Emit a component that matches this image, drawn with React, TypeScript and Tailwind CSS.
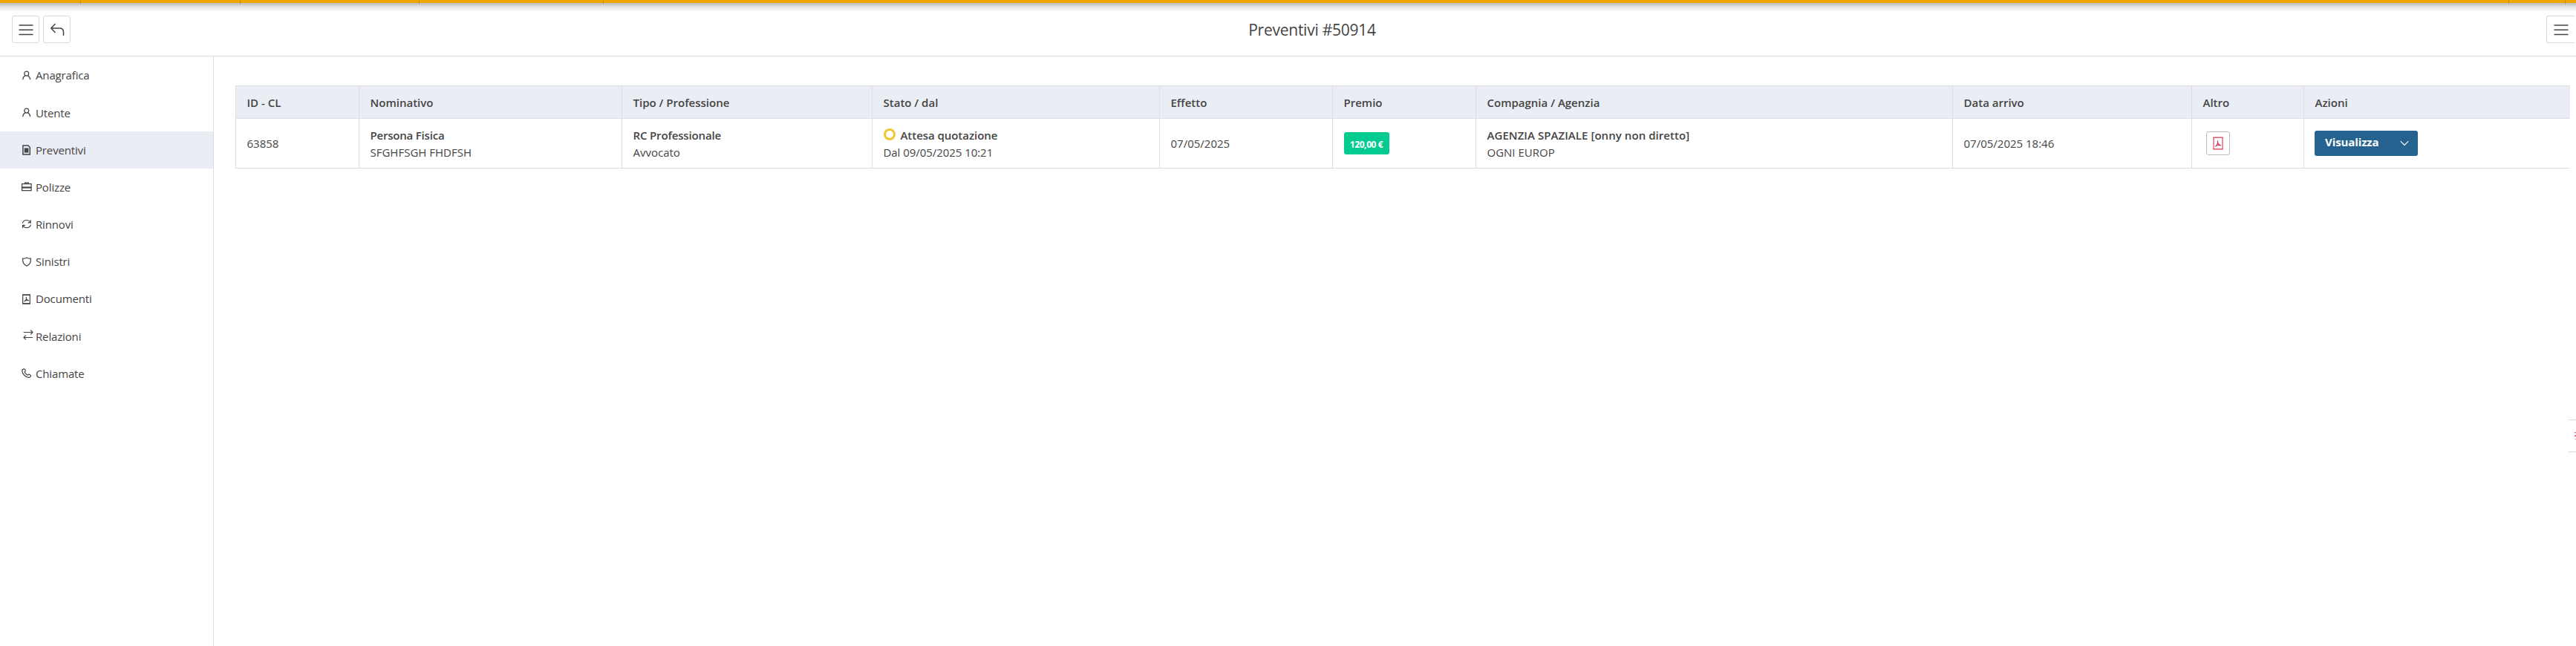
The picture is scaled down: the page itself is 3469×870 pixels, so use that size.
import type { ReactNode } from "react";

const Icon = ({ children }: { children: ReactNode }) => (
  <svg width="14" height="14" viewBox="0 0 14 14" fill="none" stroke="currentColor" strokeWidth="1.2" className="shrink-0">
    {children}
  </svg>
);

const PersonIcon = () => (
  <Icon>
    <circle cx="6.7" cy="4.1" r="3" />
    <path d="M1.700 12.300c.2-2.700 1.600-4.600 3.300-5.500M8.400 6.800c1.700.9 3.100 2.800 3.300 5.500" />
  </Icon>
);
const FileIcon = () => (
  <Icon>
    <path d="M1.900 1.100H9l2.300 2.400v9.400H1.900z" strokeWidth="1.500" />
    <path d="M3.800 4.400h5.600v6.200H3.800z" fill="currentColor" stroke="none" />
  </Icon>
);
const BriefcaseIcon = () => (
  <Icon>
    <path d="M.600 2.700h12.500v9H.600z" />
    <path d="M4.600 2.500V1.200h4.600v1.300" />
    <path d="M.600 7.500h12.500" strokeWidth="2.200" />
  </Icon>
);
const RefreshIcon = () => (
  <Icon>
    <path d="M1.300 5.600C2 3 4.200 1.500 6.700 1.500c2.300 0 4.200 1.200 5.200 3.200M12.200 1.300v3.600H8.700" />
    <path d="M12.400 7.600c-.7 2.600-2.900 4.100-5.400 4.100-2.300 0-4.200-1.200-5.200-3.200M1.500 12V8.300h3.500" />
  </Icon>
);
const ShieldIcon = () => (
  <Icon>
    <path d="M7 .900C5.200 2 3.300 2.300 1.500 2.200c-.2 4.200 1 8 5.500 10.100 4.500-2.100 5.700-5.900 5.500-10.100C10.700 2.300 8.800 2 7 .900z" />
  </Icon>
);
const DocumentIcon = () => (
  <Icon>
    <path d="M1.700.8v12.400M11.300.8v12.400" />
    <path d="M1.200 1.200h10.600M1.200 12.800h10.600" strokeWidth="1.800" />
    <path d="M6.200 3.800c.9 2.300.6 4-2.700 6.500M6.500 6.500c.6 1.600 1.600 2.300 3.300 2.200M4.200 9.300c1.500-.8 3.300-1.100 5.600-.6" />
  </Icon>
);
const SwapIcon = () => (
  <svg width="16" height="14" viewBox="0 0 16 14" fill="none" stroke="currentColor" strokeWidth="1.200" className="-mr-0.5 mb-1 shrink-0">
    <path d="M2.700 3.500h12M12.200.7 15 3.500l-2.800 2.800" />
    <path d="M15 10.500H3M5.800 7.700 3 10.500l2.800 2.800" />
  </svg>
);
const PhoneIcon = () => (
  <Icon>
    <path d="M3.300.9C2.400.7.7 2 .8 3.300c.2 4.600 4.800 9 8.900 9.100 1.300.1 2.900-1.500 2.800-2.400-.1-.7-1.800-1.800-2.600-1.900-.6 0-1.100 1.100-1.600 1.100C7.100 9.100 4.300 6.200 4.200 5c0-.5 1.200-1 1.100-1.600C5.200 2.700 4.200 1 3.300.9z" />
  </Icon>
);

const items = [
  { label: "Anagrafica", icon: <PersonIcon /> },
  { label: "Utente", icon: <PersonIcon /> },
  { label: "Preventivi", icon: <FileIcon />, active: true },
  { label: "Polizze", icon: <BriefcaseIcon /> },
  { label: "Rinnovi", icon: <RefreshIcon /> },
  { label: "Sinistri", icon: <ShieldIcon /> },
  { label: "Documenti", icon: <DocumentIcon /> },
  { label: "Relazioni", icon: <SwapIcon /> },
  { label: "Chiamate", icon: <PhoneIcon /> },
];

const headers = [
  "ID - CL",
  "Nominativo",
  "Tipo / Professione",
  "Stato / dal",
  "Effetto",
  "Premio",
  "Compagnia / Agenzia",
  "Data arrivo",
  "Altro",
  "Azioni",
];

const MenuIcon = () => (
  <svg width="20" height="16" viewBox="0 0 20 16" stroke="currentColor" strokeWidth="1.500">
    <path d="M.500 2h19M.500 8.200h19M.500 14.500h19" />
  </svg>
);

const Cell = ({ children }: { children: ReactNode }) => (
  <div className="flex flex-col items-start justify-center border-l border-[#dcdee2] pl-[14.5px] leading-[23px]">{children}</div>
);
const Pair = ({ children }: { children: ReactNode }) => <div className="flex flex-col items-start pt-[1.5px]">{children}</div>;

const columns = "grid grid-cols-[166px_354px_337px_387px_233px_193px_642px_322px_151px_359px]";

export default function App() {
  return (
    <div className="relative flex h-[870px] w-[3469px] flex-col overflow-hidden bg-white font-['Open_Sans','Noto_Sans',sans-serif] text-[15px] text-[#444444]">
      <div className="relative z-10 h-1 shrink-0 bg-[#f0a800]">
        <div className="absolute inset-x-0 top-1 h-3 bg-linear-to-b from-[#bdbdbd] via-[#e6e6e6] to-white" />
        <i className="absolute left-[108px] top-0 h-[5px] w-px bg-[#bf8820]" />
        <i className="absolute left-[323px] top-0 h-[5px] w-px bg-[#bf8820]" />
        <i className="absolute left-[564px] top-0 h-[5px] w-px bg-[#bf8820]" />
        <i className="absolute left-[812px] top-0 h-[5px] w-px bg-[#bf8820]" />
        <i className="absolute left-[3378px] top-0 h-[5px] w-px bg-[#bf8820]" />
        <i className="absolute left-[3454px] top-0 h-[5px] w-px bg-[#bf8820]" />
      </div>

      <header className="flex h-[72px] shrink-0 items-start border-b border-[#dcdcdc] pl-4 pt-[17px]">
        <button className="flex h-[37px] w-[37px] items-center justify-center rounded-[3px] border border-[#d9d9d9]">
          <MenuIcon />
        </button>
        <button className="ml-[5px] flex h-[37px] w-[37px] items-center justify-center rounded-[3px] border border-[#d9d9d9]">
          <svg width="20" height="18" viewBox="0 0 20 18" fill="none" stroke="currentColor" strokeWidth="1.500">
            <path d="M7.500 1 1.800 7l5.700 6M1.800 7H13c4 0 5.500 2 5.500 5v5" />
          </svg>
        </button>
        <h1 className="flex-1 pl-[10px] pt-[3px] text-center text-[21px] leading-8 tracking-[-0.25px]">Preventivi #50914</h1>
        <button className="mr-0.5 flex h-[37px] w-[38px] items-center justify-end rounded-l-[3px] border border-r-0 border-[#d9d9d9] pr-2">
          <MenuIcon />
        </button>
      </header>

      <div className="flex min-h-0 flex-1">
        <nav className="w-[288px] shrink-0 border-r border-[#dcdcdc] pt-[0.5px]">
          {items.map((item) => (
            <a
              key={item.label}
              className={`flex h-[50.2px] items-center gap-[5px] pl-[29px] tracking-[-0.15px] ${item.active ? "bg-[#eaedf4]" : ""}`}
            >
              {item.icon}
              {item.label}
            </a>
          ))}
        </nav>

        <main className="pl-[29px] pt-[39px]">
          <div className={`${columns} h-11 border-t border-[#dcdee2] bg-[#eaedf4] font-semibold`}>
            {headers.map((h) => (
              <div key={h} className="flex items-center border-l border-[#dcdee2] pl-[14.5px] pt-px">
                {h}
              </div>
            ))}
          </div>
          <div className={`${columns} h-[68px] border-y border-[#dcdee2]`}>
            <Cell>63858</Cell>
            <Cell>
              <Pair>
                <span className="font-semibold tracking-[-0.2px]">Persona Fisica</span>
                <span>SFGHFSGH FHDFSH</span>
              </Pair>
            </Cell>
            <Cell>
              <Pair>
                <span className="font-semibold tracking-[-0.15px]">RC Professionale</span>
                <span>Avvocato</span>
              </Pair>
            </Cell>
            <Cell>
              <Pair>
                <div className="flex items-center gap-[7px]">
                  <span className="mb-0.5 h-4 w-4 rounded-full border-[3px] border-[#f0c52f]" />
                  <span className="font-semibold tracking-[-0.05px]">Attesa quotazione</span>
                </div>
                <span className="tracking-[-0.05px]">Dal 09/05/2025 10:21</span>
              </Pair>
            </Cell>
            <Cell>07/05/2025</Cell>
            <Cell>
              <span className="flex h-[30px] w-[61px] items-center justify-center rounded-[3px] bg-[#02cb90] pt-[3px] text-[12px] font-bold tracking-[-0.4px] text-white">
                120,00 €
              </span>
            </Cell>
            <Cell>
              <Pair>
                <span className="font-semibold tracking-[0.06px]">AGENZIA SPAZIALE [onny non diretto]</span>
                <span>OGNI EUROP</span>
              </Pair>
            </Cell>
            <Cell>07/05/2025 18:46</Cell>
            <Cell>
              <button className="ml-[4.5px] flex h-8 w-8 items-center justify-center rounded-[3px] border border-[#bcbcbc] text-[#d0394f]">
                <svg width="14" height="18" viewBox="0 0 14 18" fill="none" stroke="currentColor" strokeWidth="1.100">
                  <path d="M1 1v16M13 1v16" />
                  <path d="M.500 1.200h13M.500 16.800h13" strokeWidth="1.300" />
                  <path d="M6.300 5.200c1 3.200.4 5.400-2.900 8.200M6.800 8.400c.7 2 1.800 3.200 4 3.400M3.800 12.500c1.600-.9 4-1.400 7-.7" strokeWidth="1.300" />
                </svg>
              </button>
            </Cell>
            <Cell>
              <button className="-ml-[0.5px] flex h-[34px] w-[139px] items-center justify-between rounded-[3px] bg-[#266290] pl-3.5 pr-3 font-bold text-white">
                <span className="pb-[3px] tracking-[-0.1px]">Visualizza</span>
                <svg width="12" height="8" viewBox="0 0 12 8" fill="none" stroke="currentColor" strokeWidth="1.100">
                  <path d="M.7 1.200 6 6.500l5.300-5.300" />
                </svg>
              </button>
            </Cell>
          </div>
        </main>
      </div>

      <div className="absolute right-0 top-[565px] flex h-11 w-2.5 items-center justify-end border-y border-[#d9d9d9]">
        <svg width="2" height="12" viewBox="0 0 2 12" fill="#d0697a">
          <path d="M0 1h2v1H0zM0 5h2v2H0zM0 10h2v.500H0z" />
        </svg>
      </div>
    </div>
  );
}
